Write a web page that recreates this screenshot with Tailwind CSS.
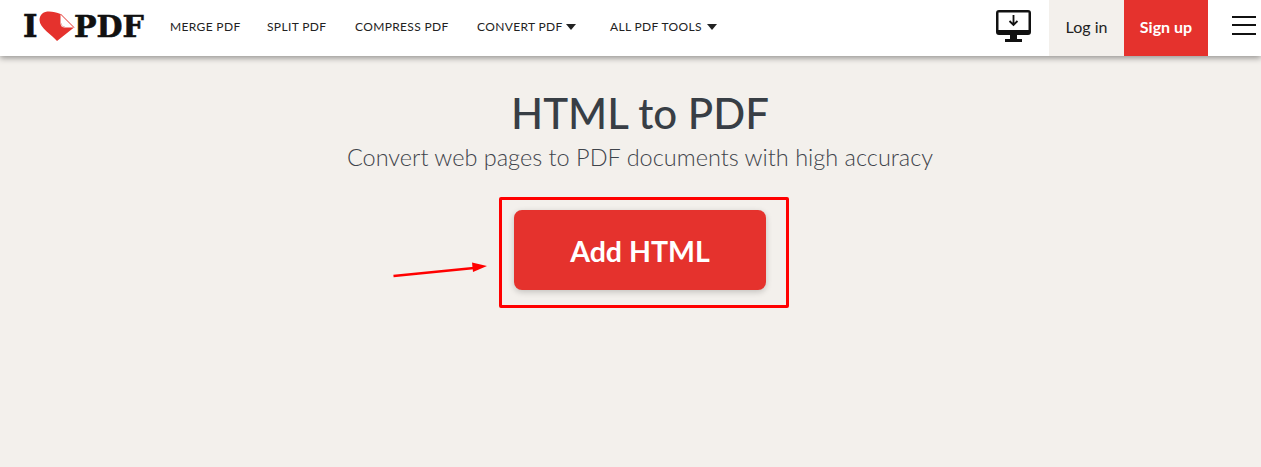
<!DOCTYPE html>
<html lang="en">
<head>
    <meta charset="UTF-8">
    <title>HTML to PDF</title>
    <script src="https://cdn.jsdelivr.net/npm/@tailwindcss/browser@4"></script>
</head>
<body class="bg-[#f3f0ec] h-[467px] w-[1261px] overflow-hidden font-['Lato',sans-serif] relative">
    <header class="h-14 bg-white flex items-center shadow-[0_2px_6px_rgba(0,0,0,0.4)] relative">
        <!-- logo -->
        <div class="w-[170px] pl-6 flex items-center shrink-0 h-full">
            <span class="font-['DejaVu_Serif',serif] font-bold text-[31px] leading-none text-[#111] w-[15px] -ml-[1px] mr-[1px] mb-[3px] [-webkit-text-stroke:0.6px_#111]">I</span>
            <svg class="w-[36px] h-[31px] mb-[3px] shrink-0" viewBox="0 0 36 31">
                <path d="M18 30 C13 24 0.500 17 0.500 9 C0.500 3 5 0.500 10 0.500 C14 0.500 18 1.500 21.500 3 V12 Q21.500 16.500 26 16.500 H35 L18 30Z" fill="#e5322d"/>
                <path d="M21.500 3 L35 16.500" fill="none" stroke="#e5322d" stroke-width="1"/>
                <path d="M22 12 Q22 16 26 16" fill="none" stroke="#e8b8b5" stroke-width="1"/>
            </svg>
            <span class="font-['DejaVu_Serif',serif] font-bold text-[30px] leading-none text-[#111] mb-[3px] -ml-[1px] [-webkit-text-stroke:0.6px_#111]">PDF</span>
        </div>
        <nav class="flex items-center text-[12px] text-[#222] tracking-[0.35px] whitespace-nowrap mb-[2px]">
            <a class="w-[97px]">MERGE PDF</a>
            <a class="w-[88px]">SPLIT PDF</a>
            <a class="w-[122px]">COMPRESS PDF</a>
            <a class="w-[133px] flex items-center gap-[3px]">CONVERT PDF <span class="border-x-[5px] border-x-transparent border-t-[6px] border-t-[#222]"></span></a>
            <a class="flex items-center gap-[5px]">ALL PDF TOOLS <span class="border-x-[5px] border-x-transparent border-t-[6px] border-t-[#222]"></span></a>
        </nav>
        <div class="ml-auto flex items-center h-full">
            <svg class="w-[35px] h-[32px] mr-[18px] mb-[4px]" viewBox="0 0 35 32">
                <path d="M3 0 H32 Q35 0 35 3 V22 Q35 25 32 25 H21 V29 H26 V32 H9 V29 H14 V25 H3 Q0 25 0 22 V3 Q0 0 3 0Z" fill="#111"/>
                <rect x="2.500" y="2.500" width="30" height="17.500" fill="#fff"/>
                <path d="M17.500 5 V15 M13.500 11 L17.500 15 L21.500 11" fill="none" stroke="#111" stroke-width="1.800"/>
            </svg>
            <a class="w-[75px] h-full bg-[#f3f0ec] flex items-center justify-center text-[16px] text-[#222] pb-[2px]">Log in</a>
            <a class="w-[84px] h-full bg-[#e5322d] flex items-center justify-center text-[16px] font-bold text-white pb-[2px]">Sign up</a>
            <div class="w-[53px] flex flex-col items-end pr-[5px] gap-[6.500px] mb-[6px]">
                <span class="w-6 h-[2px] bg-[#111]"></span>
                <span class="w-6 h-[2px] bg-[#111]"></span>
                <span class="w-6 h-[2px] bg-[#111]"></span>
            </div>
        </div>
    </header>
    <main class="flex flex-col items-center pl-[19px]">
        <h1 class="mt-[31px] text-[42px] leading-[52px] font-medium text-[#383e45]">HTML to PDF</h1>
        <p class="mt-[2px] text-[23.500px] leading-[32px] font-light text-[#3f444b]">Convert web pages to PDF documents with high accuracy</p>
        <button class="mt-[37px] w-[252px] h-[80px] pt-[3px] rounded-lg bg-[#e5322d] text-white text-[28.500px] font-bold shadow-[0_2px_6px_rgba(0,0,0,0.2)]">Add HTML</button>
    </main>
    <!-- annotations drawn over the page -->
    <div class="absolute left-[499px] top-[197px] w-[290px] h-[111px] border-[3px] border-[#ff0000] rounded-[2px]"></div>
    <svg class="absolute left-[390px] top-[258px] w-[100px] h-[22px]" viewBox="0 0 100 22">
        <path d="M3.500 18 L84 10" stroke="#ff0000" stroke-width="2.500" fill="none"/>
        <path d="M82 4.500 L97 8 L83 14Z" fill="#ff0000"/>
    </svg>
</body>
</html>
